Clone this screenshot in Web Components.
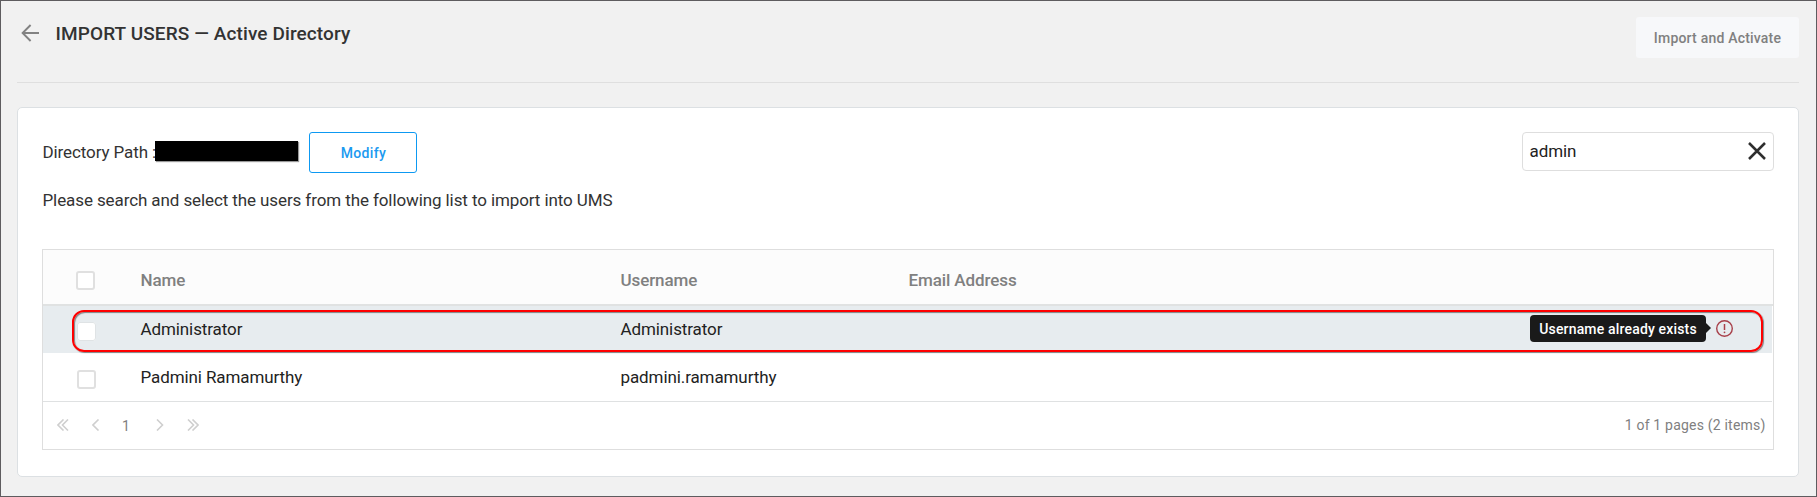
<!DOCTYPE html>
<html lang="en">
<head>
<meta charset="utf-8">
<title>Import Users</title>
<style>
html,body{margin:0;height:100%}
body{font-family:Roboto,"Liberation Sans",sans-serif;color:#333;font-size:17px;letter-spacing:-.1px;overflow:hidden}
</style>
</head>
<body>
<import-page></import-page>
<script>
const define=(name,css,html)=>customElements.define(name,class extends HTMLElement{
  constructor(){
    super();
    const t=document.createElement('template');
    t.innerHTML=`<style>*{box-sizing:border-box}${css}</style>${html}`;
    this.attachShadow({mode:'open'}).append(t.content.cloneNode(true));
  }
});

define('ui-button',`
:host{display:flex;align-items:center;justify-content:center;box-sizing:border-box;height:41px;border-radius:3px;background:#f7f8fa;color:#808080;font-weight:500;font-size:14px;letter-spacing:.2px;white-space:nowrap}
:host([outline]){background:#fff;border:1px solid #0d99f2;color:#1b9af0;letter-spacing:.35px;padding-left:1px}`,
`<slot></slot>`);

define('page-header',`
:host{display:flex;box-sizing:border-box;height:66px;border-bottom:1px solid #dfdfdf;justify-content:space-between;align-items:flex-start}
.left{display:flex;align-items:center;height:32px;gap:15.5px;padding-left:4px}
h1{margin:2px 0 0;font-size:19px;font-weight:500;line-height:32px;color:#333;letter-spacing:.11px;white-space:nowrap}
svg{display:block}
ui-button{width:163px}`,
`<div class="left"><svg width="19" height="18" viewBox="0 0 19 18" fill="none" stroke="#828282" stroke-width="1.9"><path d="M18 9H1.8M9.6 1L1.6 9l8 8"/></svg><h1><slot></slot></h1></div>
<ui-button>Import and Activate</ui-button>`);

define('search-box',`
:host{display:flex;align-items:center;justify-content:space-between;box-sizing:border-box;width:252px;height:39px;border:1px solid #dedede;border-radius:4px;background:#fff;padding:0 7px 1px 6.5px;font-size:17px;color:#222}
svg{display:block}`,
`<span><slot></slot></span><svg width="18" height="18" viewBox="0 0 18 18" fill="none" stroke="#2e2e2e" stroke-width="2.5"><path d="M1 1l16 16M17 1L1 17"/></svg>`);

define('check-box',`
:host{display:block;box-sizing:border-box;width:19px;height:19px;border:2px solid #e0e0e0;border-radius:3px;background:#fff}`,``);

define('status-tip',`
:host{display:flex;align-items:center;gap:10px}
.tip{position:relative;width:176px;height:27px;border-radius:4px;background:#1a1a1a;color:#fff;font-size:14px;font-weight:500;letter-spacing:.17px;line-height:28px;text-align:center;white-space:nowrap}
.tip::after{content:"";position:absolute;left:176px;top:8px;border:5.5px solid transparent;border-left-color:#1a1a1a;border-right:0}
svg{display:block}`,
`<div class="tip"><slot></slot></div><svg width="18" height="18" viewBox="0 0 18 18"><circle cx="8.5" cy="8.5" r="7.8" fill="none" stroke="#a8404a" stroke-width="1.4"/><path d="M8.5 4v6" stroke="#a8404a" stroke-width="1.5"/><circle cx="8.5" cy="12.3" r=".9" fill="#a8404a"/></svg>`);

define('user-row',`
:host{display:grid;grid-template-columns:97.5px 480px 288px 1fr;box-sizing:border-box;height:48px;padding-bottom:1px;color:#222;align-items:center;position:relative;margin-right:1px}
:host([head]){height:56px;padding:6px 0 0;margin-right:0;background:#fcfcfc;border-bottom:2px solid #e0e2e2;color:#808080;font-weight:500}
:host([flagged]){height:47px;padding-bottom:2px;background:#e7ecef}
check-box{margin-left:34px}
:host([head]) check-box{margin-left:33px}
:host([flagged]) check-box{margin-top:6px;border-color:#fff;border-width:1px;outline:1px solid #dfe3e5;outline-offset:-1px}
:host([last]) check-box{margin-top:6px}
.end{display:flex;align-items:center;height:100%;white-space:nowrap}
.tip{margin-left:auto;margin-right:38px}
.ring{display:none}
:host([flagged]) .ring{display:block;position:absolute;left:29px;right:9.5px;top:4px;height:42px;border:2px solid #f00;border-radius:12px;box-shadow:1px 1px 1px rgba(0,0,0,.45),inset 1px 1px 1px rgba(0,0,0,.45)}`,
`<check-box></check-box><slot name="name"></slot><slot name="user"></slot><div class="end"><slot name="mail"></slot><div class="tip"><slot name="status"></slot></div></div><div class="ring"></div>`);

define('page-nav',`
:host{display:flex;justify-content:space-between;box-sizing:border-box;height:48px;border-top:1px solid #dfe1e2;margin-right:1px;font-size:14px;color:#808080;padding:0 6.5px 1px 14px;align-items:center}
.nav{display:flex;align-items:center}
svg{display:block;fill:none;stroke:#cfcfcf;stroke-width:1.6}
.n{width:8px;margin:2px 26px 0 22px}
.total{letter-spacing:.2px}`,
`<div class="nav">
<svg width="12" height="12" viewBox="0 0 12 12"><path d="M6.5.5L1 6l5.5 5.5M11 .5L5.5 6l5.5 5.5"/></svg>
<svg width="8" height="12" viewBox="0 0 8 12" style="margin-left:23px"><path d="M6.5.5L1 6l5.5 5.5"/></svg>
<span class="n">1</span>
<svg width="8" height="12" viewBox="0 0 8 12"><path d="M1 .5L6.5 6 1 11.5"/></svg>
<svg width="12" height="12" viewBox="0 0 12 12" style="margin-left:23px"><path d="M1 .5L6.5 6 1 11.5M5.5.5L11 6l-5.5 5.5"/></svg>
</div><span class="total"><slot></slot></span>`);

define('user-table',`
:host{display:block;box-sizing:border-box;border:1px solid #dedede;height:201px}`,
`<user-row head><span slot="name">Name</span><span slot="user">Username</span><span slot="mail">Email Address</span></user-row>
<user-row flagged><span slot="name">Administrator</span><span slot="user">Administrator</span><status-tip slot="status">Username already exists</status-tip></user-row>
<user-row last><span slot="name">Padmini Ramamurthy</span><span slot="user">padmini.ramamurthy</span></user-row>
<page-nav>1 of 1 pages (2 items)</page-nav>`);

define('import-card',`
:host{display:block;box-sizing:border-box;height:370px;margin-top:24px;border:1px solid #dce0e3;border-radius:5px;background:#fff;padding:24px 24px 0}
.top{display:flex;align-items:flex-start;height:41px}
.path{line-height:40px;width:112.5px;margin-left:.5px;white-space:nowrap}
.mask{width:143px;height:20px;margin-top:9px;margin-right:11px;background:#000;box-shadow:1px 1px 1px rgba(0,0,0,.4);position:relative}
ui-button{width:108px}
search-box{margin-left:auto}
p{margin:17px 0 0 .5px;line-height:20px;height:59px}`,
`<div class="top"><span class="path">Directory Path :</span><div class="mask"></div><ui-button outline>Modify</ui-button><search-box>admin</search-box></div>
<p>Please search and select the users from the following list to import into UMS</p>
<user-table></user-table>`);

define('import-page',`
:host{display:block;box-sizing:border-box;height:497px;border:1px solid #5e5c5f;background:#f1f1f1;padding:16px 17px 0 16px}`,
`<page-header>IMPORT USERS — Active Directory</page-header><import-card></import-card>`);
</script>
</body>
</html>
